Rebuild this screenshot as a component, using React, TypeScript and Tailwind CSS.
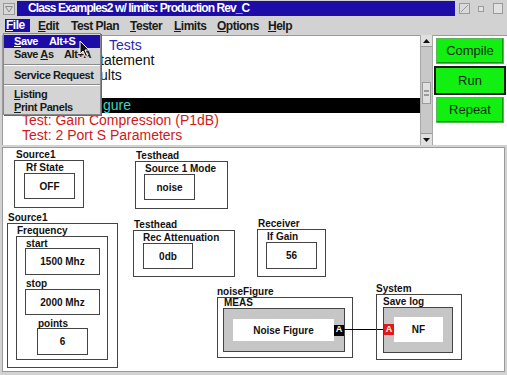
import React from "react";

const ui = "font-['Liberation_Sans',Arial,Helvetica,sans-serif]";

const MenuItem = ({ first, rest, className }: { first: string; rest: string; className: string }) => (
  <div className={className}>
    <span className="underline underline-offset-[1px]">{first}</span>
    {rest}
  </div>
);

const GreenButton = ({ label, active }: { label: string; active?: boolean }) =>
  active ? (
    <div className="ml-[1px] mt-[2px] h-[29px] w-[72px] border-2 border-[#1a1a1a] bg-[#12f012] text-center text-[13px] leading-[25px] text-[#0c2c0c]">
      {label}
    </div>
  ) : (
    <div className="ml-[3px] mt-[2px] h-[26px] w-[68px] border border-[#5ab45a] bg-[#12f012] text-center text-[13px] leading-[24px] text-[#0c2c0c] shadow-[inset_-1px_-1px_0_#0a9a0a]">
      {label}
    </div>
  );

const Value = ({ children, className }: { children: React.ReactNode; className: string }) => (
  <div className={`flex items-center justify-center border border-[#444] text-[10px] font-bold ${className}`}>{children}</div>
);

const Label = ({ children, className = "" }: { children: React.ReactNode; className?: string }) => (
  <div className={`text-[10px] font-bold leading-[10px] ${className}`}>{children}</div>
);

export default function App() {
  return (
    <div className={`relative h-[375px] w-[507px] overflow-hidden bg-[#d2d2d2] text-[#111] ${ui}`}>
      {/* title bar */}
      <div className="flex h-[17px] items-center">
        <div className="flex w-[17px] justify-center">
          <svg width="12" height="12" viewBox="0 0 12 12">
            <rect x="0.5" y="0.5" width="11" height="11" fill="#d8d8d8" stroke="#9a9a9a" />
            <path d="M2.5 3.5 L9.5 3.5 L6 9 Z" fill="none" stroke="#8a8a8a" />
          </svg>
        </div>
        <div className="h-[15px] w-[438px] bg-[#1d0ca6] pl-[11px] text-[12px] font-bold leading-[15px] tracking-[-0.9px] text-white">
          Class Examples2 w/ limits: Production Rev_C
        </div>
        <div className="flex flex-1 items-center pl-[4px]">
          <svg width="11" height="11" viewBox="0 0 11 11">
            <rect x="0.5" y="0.5" width="10" height="10" fill="#dadada" stroke="#9a9a9a" />
            <path d="M2 9 L9 2" stroke="#9a9a9a" />
          </svg>
          <div className="ml-[8px] h-[6px] w-[6px] border border-[#9a9a9a] bg-[#e2e2e2]" />
          <div className="ml-[9px] h-[11px] w-[10px] border border-[#9a9a9a] bg-[#e2e2e2]" />
        </div>
      </div>

      {/* menu bar */}
      <div className="flex h-[17px] items-center pl-[5px] text-[12px] font-bold tracking-[-0.5px] text-[#1a1a1a]">
        <MenuItem first="F" rest="ile" className="h-[13px] w-[25px] bg-[#1d0ca6] pl-[1px] leading-[13px] text-white" />
        <MenuItem first="E" rest="dit" className="ml-[8px] w-[33px]" />
        <MenuItem first="" rest="Test Plan" className="w-[59px]" />
        <MenuItem first="T" rest="ester" className="w-[44px]" />
        <MenuItem first="L" rest="imits" className="w-[43px]" />
        <MenuItem first="O" rest="ptions" className="w-[51px]" />
        <MenuItem first="H" rest="elp" className="w-[40px]" />
      </div>

      {/* top panel: test list (partly under the open menu), scrollbar, buttons */}
      <div className="flex h-[111px] pl-[2px] pt-[1px]">
        <div className="w-[418px] border-t border-l border-[#9a9a9a] bg-white pt-[2px] text-[14px] leading-[15px]">
          <div className="h-[15px] pl-[106px] text-[#2a2aaa]">Tests</div>
          <div className="h-[15px] pl-[97px]">tatement</div>
          <div className="h-[15px] pl-[97px]">ults</div>
          <div className="h-[15px]" />
          <div className="h-[15px] bg-black pl-[100px] text-[#3ad6c4]">gure</div>
          <div className="pl-[19px] text-[#cf1a1a]">Test: Gain Compression (P1dB)</div>
          <div className="pl-[19px] text-[#cf1a1a]">Test: 2 Port S Parameters</div>
        </div>
        <div className="flex w-[13px] flex-col border-x border-[#a8a8a8] bg-[#c8c8c8]">
          <div className="flex h-[12px] items-center justify-center border-b border-[#9a9a9a] bg-[#e0e0e0]">
            <svg width="7" height="4" viewBox="0 0 7 4"><path d="M0 4 L3.5 0 L7 4 Z" fill="#111" /></svg>
          </div>
          <div className="mx-[1px] mt-[35px] flex h-[22px] items-center justify-center border border-[#9a9a9a] bg-[#e0e0e0]">
            <div className="h-[6px] w-[5px] border-y-2 border-[#9a9a9a]" />
          </div>
          <div className="flex-1" />
          <div className="flex h-[12px] items-center justify-center border-t border-[#9a9a9a] bg-[#e0e0e0]">
            <svg width="7" height="4" viewBox="0 0 7 4"><path d="M0 0 L3.5 4 L7 0 Z" fill="#111" /></svg>
          </div>
        </div>
        <div className="flex w-[74px] flex-col border-t border-[#9a9a9a] bg-white">
          <GreenButton label="Compile" />
          <GreenButton label="Run" active />
          <GreenButton label="Repeat" />
        </div>
      </div>

      {/* diagram canvas */}
      <div className="relative mx-[2px] mt-[2px] h-[225px] border border-[#9a9a9a] bg-white">
        <div className="absolute left-[11px] top-[2px]">
          <Label className="pl-[2px]">Source1</Label>
          <div className="h-[48px] w-[70px] border border-[#444] pl-[9px] pt-[2px]">
            <Label className="pl-[2px]">Rf State</Label>
            <Value className="h-[26px] w-[51px]">OFF</Value>
          </div>
        </div>

        <div className="absolute left-[132px] top-[3px]">
          <Label className="pl-[1px]">Testhead</Label>
          <div className="h-[48px] w-[93px] border border-[#444] pl-[8px] pt-[2px]">
            <Label className="pl-[1px]">Source 1 Mode</Label>
            <Value className="h-[26px] w-[51px]">noise</Value>
          </div>
        </div>

        <div className="absolute left-[4px] top-[65px]">
          <Label className="pl-[1px]">Source1</Label>
          <div className="h-[145px] w-[111px] border border-[#444] pl-[8px] pt-[2px]">
            <Label className="pl-[1px]">Frequency</Label>
            <div className="h-[124px] w-[92px] border border-[#444] pl-[8px] pt-[2px]">
              <div className="pl-[1px] text-[10px] font-bold leading-[9px]">start</div>
              <Value className="h-[27px] w-[75px]">1500 Mhz</Value>
              <div className="mt-[4px] pl-[1px] text-[10px] font-bold leading-[10px]">stop</div>
              <Value className="h-[26px] w-[75px]">2000 Mhz</Value>
              <div className="ml-[12px]">
                <div className="mt-[4px] pl-[1px] text-[10px] font-bold leading-[9px]">points</div>
                <Value className="h-[27px] w-[51px]">6</Value>
              </div>
            </div>
          </div>
        </div>

        <div className="absolute left-[130px] top-[72px]">
          <Label className="pl-[1px]">Testhead</Label>
          <div className="h-[47px] w-[102px] border border-[#444] pl-[9px] pt-[2px]">
            <Label>Rec Attenuation</Label>
            <Value className="h-[26px] w-[50px]">0db</Value>
          </div>
        </div>

        <div className="absolute left-[254px] top-[71px]">
          <Label className="pl-[1px]">Receiver</Label>
          <div className="h-[48px] w-[69px] border border-[#444] pl-[8px] pt-[2px]">
            <Label className="pl-[1px]">If Gain</Label>
            <Value className="h-[27px] w-[51px]">56</Value>
          </div>
        </div>

        <div className="absolute left-[214px] top-[139px]">
          <Label>noiseFigure</Label>
          <div className="h-[61px] w-[136px] border border-[#444] pl-[5px]">
            <Label className="pl-[1px]">MEAS</Label>
            <div className="h-[44px] w-[122px] border border-[#444] bg-[#c6c6c6] pl-[9px] pt-[10px]">
              <div className="flex items-center">
                <div className="flex h-[22px] w-[101px] items-center justify-center bg-white text-[10px] font-bold">Noise Figure</div>
                <div className="flex h-[11px] w-[10px] items-center justify-center bg-black text-[9px] font-bold text-white">A</div>
              </div>
            </div>
          </div>
        </div>

        <div className="absolute left-[340px] top-[181px] h-[1px] w-[41px] bg-black" />

        <div className="absolute left-[373px] top-[136px]">
          <Label>System</Label>
          <div className="h-[66px] w-[86px] border border-[#444] pl-[6px] pt-[1px]">
            <div className="text-[10px] font-bold leading-[11px]">Save log</div>
            <div className="h-[46px] w-[70px] border border-[#444] bg-[#c6c6c6] pt-[9px]">
              <div className="flex items-center">
                <div className="flex h-[11px] w-[10px] items-center justify-center bg-[#e01a1a] text-[9px] font-bold text-white">A</div>
                <div className="flex h-[25px] w-[49px] items-center justify-center bg-white text-[10px] font-bold">NF</div>
              </div>
            </div>
          </div>
        </div>
      </div>

      {/* File dropdown menu */}
      <div className="absolute left-[3px] top-[33px] w-[98px] border border-[#8a8a8a] bg-[#d4d4d4] py-[1px] text-[11px] font-bold leading-[13px] tracking-[-0.4px] text-[#1a1a1a] shadow-[1px_1px_0_#6a6a6a]">
        <div className="flex bg-[#1d0ca6] pl-[10px] text-white">
          <span className="w-[35px]"><span className="underline">S</span>ave</span>
          <span>Alt+S</span>
        </div>
        <div className="flex pl-[10px]">
          <span className="w-[50px]">Save <span className="underline">A</span>s</span>
          <span>Alt+A</span>
        </div>
        <div className="my-[3px] h-[2px] border-t border-b border-t-[#8a8a8a] border-b-white" />
        <div className="pl-[10px]">Service Request</div>
        <div className="my-[2px] h-[2px] border-t border-b border-t-[#8a8a8a] border-b-white" />
        <div className="pl-[10px]"><span className="underline">L</span>isting</div>
        <div className="pl-[10px] leading-[12px]"><span className="underline">P</span>rint Panels</div>
      </div>

      {/* mouse pointer */}
      <svg className="absolute left-[79px] top-[40px]" width="12" height="18" viewBox="0 0 12 18">
        <path d="M1 1 L1 14 L4 11 L6.5 16.5 L8.5 15.5 L6 10 L10 10 Z" fill="#111" stroke="#fff" strokeWidth="1" />
      </svg>
    </div>
  );
}
